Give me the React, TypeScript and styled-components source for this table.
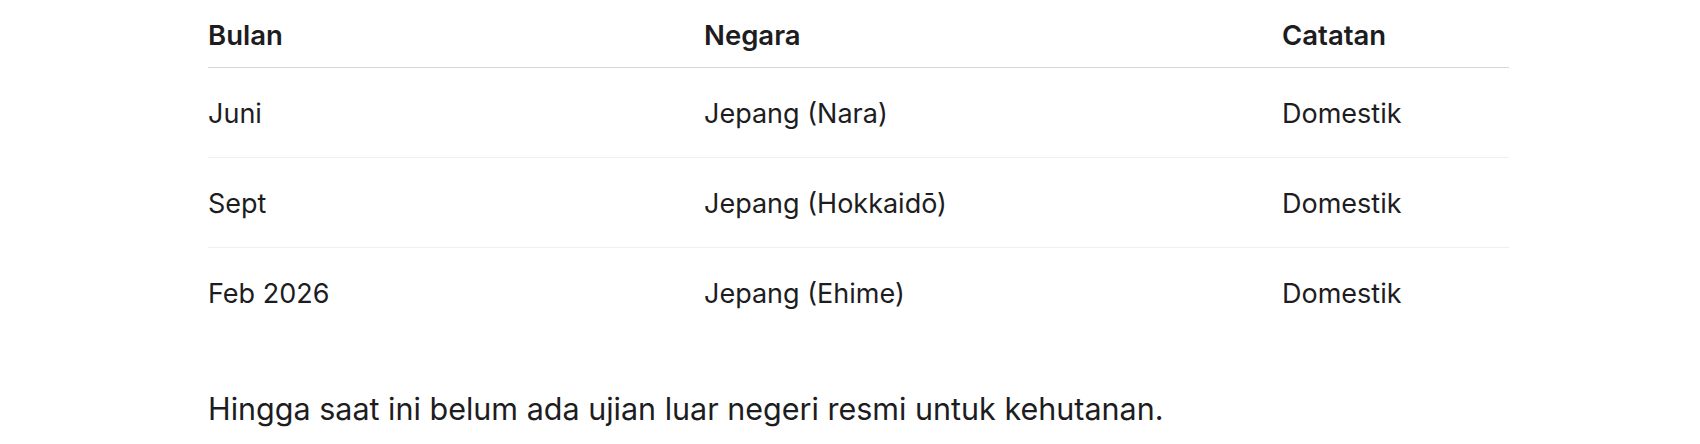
import React from 'react'
import styled, { createGlobalStyle } from 'styled-components'

const GlobalStyle = createGlobalStyle`
  html, body {
    margin: 0;
    padding: 0;
    background: #ffffff;
  }
  body {
    font-family: Inter, "Noto Sans", "Liberation Sans", sans-serif;
    color: #1d1d1f;
  }
`

const Page = styled.div`
  padding: 0 191px 0 208px;
`

const Table = styled.div`
  display: grid;
  grid-template-columns: 496px 578px 1fr;
`

const HeadCell = styled.div`
  font-size: 27.5px;
  font-weight: 600;
  line-height: 30px;
  padding: 20px 0 17px;
  border-bottom: 1px solid #d6d6d6;
`

const Cell = styled.div<{ last?: boolean }>`
  font-size: 27px;
  font-weight: 400;
  line-height: 30px;
  padding: 31px 0 28px;
  border-bottom: 1px solid ${(props) => (props.last ? 'transparent' : '#efefef')};
`

const Note = styled.p`
  margin: 53px 0 0;
  font-size: 30.5px;
  line-height: 36px;
`

const rows = [
  ['Juni', 'Jepang (Nara)', 'Domestik'],
  ['Sept', 'Jepang (Hokkaidō)', 'Domestik'],
  ['Feb 2026', 'Jepang (Ehime)', 'Domestik'],
]

export default function App() {
  return (
    <Page>
      <GlobalStyle />
      <Table>
        <HeadCell>Bulan</HeadCell>
        <HeadCell>Negara</HeadCell>
        <HeadCell>Catatan</HeadCell>
        {rows.map((row, i) =>
          row.map((text, j) => (
            <Cell key={`${i}-${j}`} last={i === rows.length - 1}>
              {text}
            </Cell>
          ))
        )}
      </Table>
      <Note>Hingga saat ini belum ada ujian luar negeri resmi untuk kehutanan.</Note>
    </Page>
  )
}
